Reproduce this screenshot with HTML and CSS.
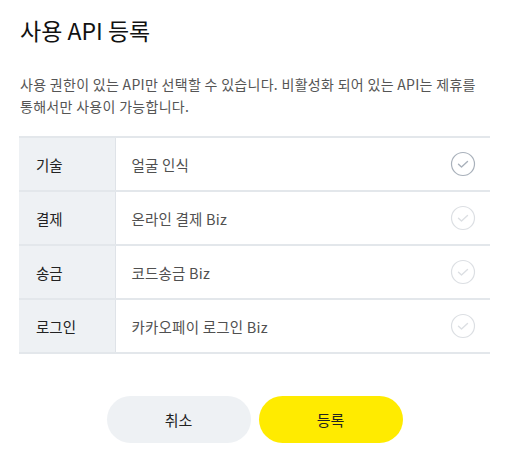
FILE: index.html
```html
<!DOCTYPE html>
<html>
<head>
    <title>사용 API 등록</title>
    <link rel="stylesheet" href="styles.css">
</head>
<body>
    <div class="modal">
        <h1 class="title">사용 API 등록</h1>
        <p class="desc">사용 권한이 있는 API만 선택할 수 있습니다. 비활성화 되어 있는 API는 제휴를 통해서만 사용이 가능합니다.</p>

        <table class="api-table">
            <colgroup>
                <col class="col-name">
                <col>
                <col class="col-check">
            </colgroup>
            <tr>
                <th>기술</th>
                <td>얼굴 인식</td>
                <td class="check-cell">
                    <svg class="check active" width="26" height="26" viewBox="0 0 26 26">
                        <circle cx="13" cy="13" r="11.5" fill="none" stroke-width="1.2"/>
                        <path d="M8.5 13.2l3 2.8 6-5.5" fill="none" stroke-width="1.4" stroke-linecap="round" stroke-linejoin="round"/>
                    </svg>
                </td>
            </tr>
            <tr>
                <th>결제</th>
                <td>온라인 결제 Biz</td>
                <td class="check-cell">
                    <svg class="check" width="26" height="26" viewBox="0 0 26 26">
                        <circle cx="13" cy="13" r="11.5" fill="none" stroke-width="1.2"/>
                        <path d="M8.5 13.2l3 2.8 6-5.5" fill="none" stroke-width="1.4" stroke-linecap="round" stroke-linejoin="round"/>
                    </svg>
                </td>
            </tr>
            <tr>
                <th>송금</th>
                <td>코드송금 Biz</td>
                <td class="check-cell">
                    <svg class="check" width="26" height="26" viewBox="0 0 26 26">
                        <circle cx="13" cy="13" r="11.5" fill="none" stroke-width="1.2"/>
                        <path d="M8.5 13.2l3 2.8 6-5.5" fill="none" stroke-width="1.4" stroke-linecap="round" stroke-linejoin="round"/>
                    </svg>
                </td>
            </tr>
            <tr>
                <th>로그인</th>
                <td>카카오페이 로그인 Biz</td>
                <td class="check-cell">
                    <svg class="check" width="26" height="26" viewBox="0 0 26 26">
                        <circle cx="13" cy="13" r="11.5" fill="none" stroke-width="1.2"/>
                        <path d="M8.5 13.2l3 2.8 6-5.5" fill="none" stroke-width="1.4" stroke-linecap="round" stroke-linejoin="round"/>
                    </svg>
                </td>
            </tr>
        </table>

        <div class="buttons">
            <button type="button" class="btn btn-cancel">취소</button>
            <button type="button" class="btn btn-submit">등록</button>
        </div>
    </div>
</body>
</html>
```

FILE: styles.css
```css
body {
    margin: 0;
    background-color: #fff;
    font-family: "Noto Sans CJK KR", "Noto Sans", sans-serif;
    color: #222;
}

.modal {
    width: 471px;
    padding: 13px 0 0 19px;
}

.title {
    margin: 0 0 0 1px;
    font-size: 23px;
    font-weight: 400;
    line-height: 34px;
    color: #111;
}

.desc {
    margin: 26px 0 0 1px;
    font-size: 14px;
    line-height: 22px;
    letter-spacing: 0.3px;
    color: #555;
    word-break: keep-all;
}

.api-table {
    width: 100%;
    margin-top: 19px;
    table-layout: fixed;
    border-collapse: collapse;
    border-top: 2px solid #e3e7eb;
}

.col-name {
    width: 96px;
}

.col-check {
    width: 60px;
}

.api-table th,
.api-table td {
    height: 52px;
    padding: 0;
    border-bottom: 2px solid #e3e7eb;
    font-size: 14.5px;
    font-weight: 400;
    text-align: left;
}

.api-table th {
    padding-left: 17px;
    background-color: #eef1f4;
    border-right: 1px solid #dfe3e8;
    color: #222;
}

.api-table td {
    padding-left: 16px;
    color: #505050;
    letter-spacing: 0.2px;
}

.api-table .check-cell {
    padding: 0 14px 0 0;
    text-align: right;
}

.check {
    display: inline-block;
    vertical-align: middle;
    stroke: #dcdfe3;
}

.check.active {
    stroke: #a9b1bb;
}

.buttons {
    display: flex;
    justify-content: center;
    gap: 8px;
    margin-top: 42px;
}

.btn {
    width: 144px;
    height: 47px;
    border: none;
    border-radius: 24px;
    font-family: inherit;
    font-size: 15px;
    color: #222;
    cursor: pointer;
}

.btn-cancel {
    background-color: #eef1f4;
}

.btn-submit {
    background-color: #ffeb00;
}
```
